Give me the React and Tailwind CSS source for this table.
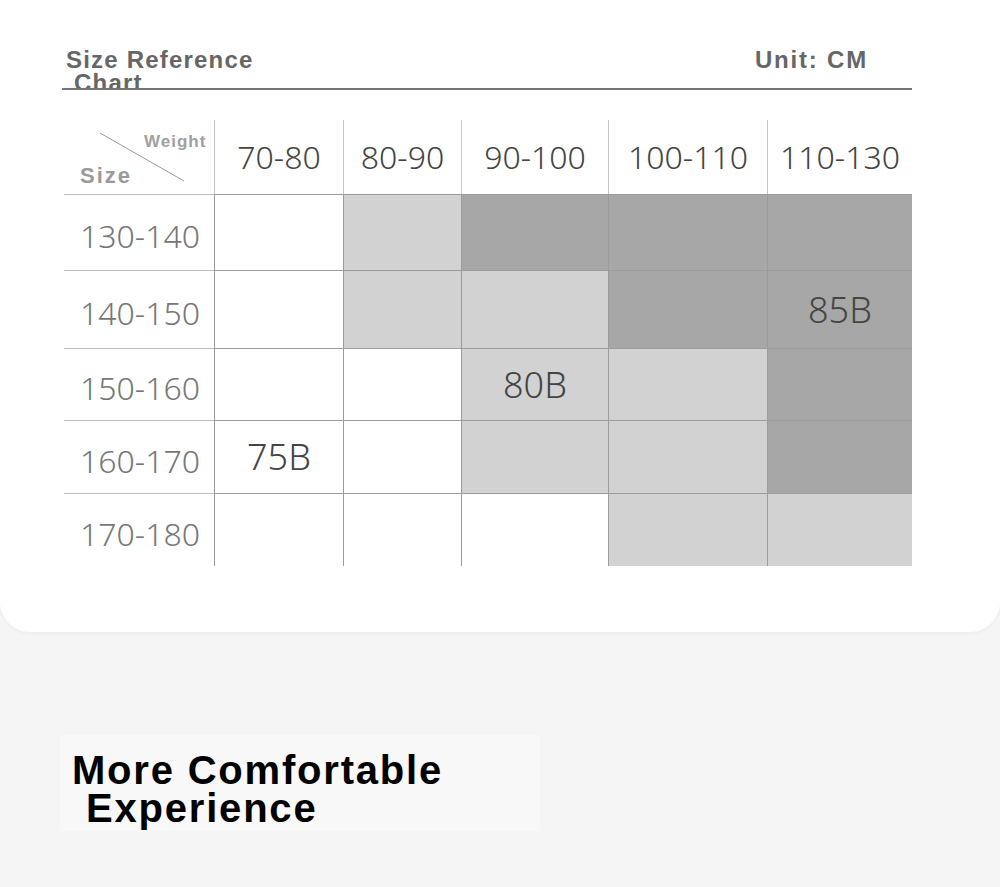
const cols = ["70-80", "80-90", "90-100", "100-110", "110-130"];

// 0 = white, 1 = light grey, 2 = dark grey
const rows = [
  { label: "130-140", h: "h-[76px]", cells: [0, 1, 2, 2, 2], text: {} },
  { label: "140-150", h: "h-[78px]", cells: [0, 1, 1, 2, 2], text: { 4: "85B" } },
  { label: "150-160", h: "h-[72px]", cells: [0, 0, 1, 1, 2], text: { 2: "80B" } },
  { label: "160-170", h: "h-[73px]", cells: [0, 0, 1, 1, 2], text: { 0: "75B" } },
  { label: "170-180", h: "h-[73px]", cells: [0, 0, 0, 1, 1], text: {} },
];

const fills = ["bg-white", "bg-[#d2d2d2]", "bg-[#a7a7a7]"];

export default function App() {
  return (
    <div className="w-[1000px] h-[887px] bg-[#f5f5f5] overflow-hidden font-['Noto_Sans',sans-serif]">
      {/* ==========================
             SIZE CHART CARD
      =========================== */}
      <div className="bg-white h-[632px] rounded-b-[30px] shadow-[0_2px_4px_rgba(0,0,0,0.03)] pt-[48px] pl-[62px]">
        <div className="w-[850px] h-[42px] border-b-2 border-[#777] overflow-hidden font-['Liberation_Sans',Arial,sans-serif] font-bold text-[#666]">
          <div className="flex justify-between pl-[4px] pr-[44px]">
            <div className="text-[24px] leading-[23px] tracking-[1.2px]">
              Size Reference
              <div className="pl-[8px]">Chart</div>
            </div>
            <div className="text-[24px] leading-[23px] tracking-[1.8px]">Unit: CM</div>
          </div>
        </div>

        {/* table */}
        <div className="mt-[30px] ml-[2px] w-[848px]">
          <div className="grid grid-cols-[150px_129px_118px_147px_159px_145px] h-[74px]">
            <div className="relative">
              <svg className="absolute left-0 top-0" width="150" height="74">
                <line x1="36" y1="13" x2="120" y2="61" stroke="#9a9a9a" strokeWidth="1" />
              </svg>
              <span className="absolute left-[80px] top-[9px] font-['Liberation_Sans',Arial,sans-serif] font-bold text-[17px] text-[#a0a0a0] tracking-[1px]">
                Weight
              </span>
              <span className="absolute left-[16px] top-[39px] font-['Liberation_Sans',Arial,sans-serif] font-bold text-[22px] text-[#9a9a9a] tracking-[2px]">
                Size
              </span>
            </div>
            {cols.map((c) => (
              <div
                key={c}
                className="border-l border-[#c4c4c4] flex items-center justify-center text-[32px] font-light text-[#444]"
              >
                {c}
              </div>
            ))}
          </div>

          {rows.map((r) => (
            <div
              key={r.label}
              className={`grid grid-cols-[150px_129px_118px_147px_159px_145px] ${r.h}`}
            >
              <div className="border-t border-[#bdbdbd] flex items-center justify-center text-[32px] font-light text-[#777] pl-[2px] pt-[7px]">
                {r.label}
              </div>
              {r.cells.map((f, i) => (
                <div
                  key={i}
                  className={`border-t border-l border-[#9c9c9c] ${fills[f]} flex items-center justify-center text-[36px] font-light text-[#444]`}
                >
                  {r.text[i] || ""}
                </div>
              ))}
            </div>
          ))}
        </div>
      </div>

      {/* ==========================
             COMFORT TEXT
      =========================== */}
      <div className="mt-[103px] ml-[60px] w-[480px] h-[96px] bg-[#f8f8f8] pt-[16px] pl-[12px] font-['Liberation_Sans',Arial,sans-serif] font-bold text-black text-[40px] leading-[38px] tracking-[1.8px]">
        <div>More Comfortable</div>
        <div className="pl-[14px]">Experience</div>
      </div>
    </div>
  );
}
